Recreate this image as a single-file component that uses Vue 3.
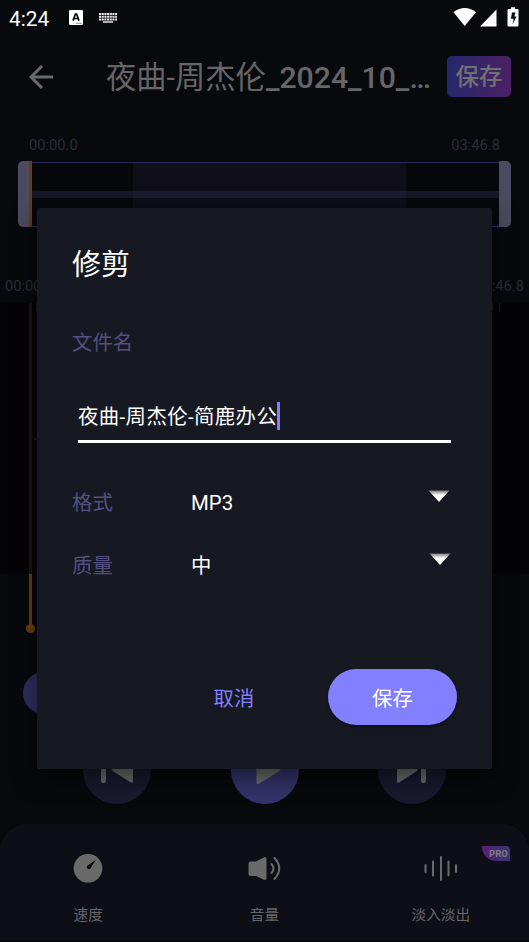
<script setup>
import { ref } from 'vue'

const filename = ref('夜曲-周杰伦-简鹿办公')
const options = [
  { label: '格式', value: 'MP3' },
  { label: '质量', value: '中' },
]
</script>

<template>
  <div class="screen">
    <div class="status">
      <span class="clock">4:24</span>
      <svg class="ime" width="14" height="15" viewBox="0 0 14 15">
        <rect width="14" height="15" rx="1.2" fill="#fff" />
        <path d="M4 10.7 6.4 4h1.2L10 10.7M4.8 8.5h4.4" fill="none" stroke="#08090d" stroke-width="1.7" />
        <path d="M7 13.3h6" stroke="#777" stroke-width=".8" />
      </svg>
      <svg class="keyboard" width="18" height="10" viewBox="0 0 18 10">
        <path d="M0 1h18M0 3.7h18M0 6.4h18" stroke="#e8e8e8" stroke-width="2" stroke-dasharray="2.1 .58" />
        <path d="M4 9h10" stroke="#e8e8e8" stroke-width="1.5" />
      </svg>
      <svg class="signals" width="67" height="20" viewBox="0 0 67 20" fill="#fff">
        <path d="M.5 5.2Q11.7-3 23 5.2L11.7 19z" />
        <path d="M43.5 2.5v17H27z" />
        <path d="M58 .2h4v1.7h2.5q1 0 1 1v15.6q0 1-1 1h-9q-1 0-1-1V2.9q0-1 1-1H58z" />
        <path d="M59 5.5h3.4l-1 4h2.2l-4 7.5 1-5.3h-2.7z" fill="#08090d" />
      </svg>
    </div>

    <header class="header">
      <svg class="back" width="24" height="24" viewBox="0 0 24 24">
        <path d="M24 12H2.500M13 1 2 12l11 11" fill="none" stroke="#6a6a6a" stroke-width="3" />
      </svg>
      <h1 class="title"><span class="name">夜曲-周杰伦</span>_2024_10_…</h1>
      <button class="header-save">保存</button>
    </header>

    <div class="times overview"><span>00:00.0</span><span>03:46.8</span></div>
    <div class="trim">
      <div class="handle left"></div>
      <div class="track"><div class="range"></div></div>
      <div class="handle right"></div>
    </div>
    <div class="times detail"><span>00:00.0</span><span>03:46.8</span></div>
    <div class="wave">
      <div class="tick-row"><i></i><i></i><i></i></div>
      <div class="zero"></div>
    </div>
    <div class="below">
      <div class="needle"></div>
      <div class="knob"></div>
      <div class="round"></div>
    </div>

    <div class="player">
      <div class="control">
        <svg width="68" height="68" viewBox="0 0 68 68" fill="#6a6a6a">
          <rect x="18" y="22" width="5" height="25" rx="2" />
          <path d="M48.500 22q1.500-1 1.500 1v22.500q0 2-2 1L29.500 35q-2-1 0-2z" />
        </svg>
      </div>
      <div class="control main">
        <svg width="68" height="68" viewBox="0 0 68 68" fill="#6a6a6a">
          <path d="M25.500 22q0-2 2-1l21 12q2 1 0 2l-21 13q-2 1-2-1z" />
        </svg>
      </div>
      <div class="control">
        <svg width="68" height="68" viewBox="0 0 68 68" fill="#6a6a6a">
          <path d="M19 23q0-2 1.500-1L39 33q2 1 0 2L21 46.500q-2 1-2-1z" />
          <rect x="43" y="22" width="5" height="25" rx="2" />
        </svg>
      </div>
    </div>

    <nav class="tools">
      <div class="tool">
        <svg width="34" height="30" viewBox="0 0 34 30">
          <circle cx="17" cy="15.300" r="14.300" fill="#6a6a6a" />
          <path d="M25 6.800 20 14.500a2.100 2.100 0 1 1-3.100-2.300z" fill="#0e0e16" />
        </svg>
        <span>速度</span>
      </div>
      <div class="tool">
        <svg width="34" height="30" viewBox="0 0 34 30">
          <path d="M3.500 8.500H9L16.500 4.500q3-1.300 3 1.500v19q0 2.800-3 1.500L9 23H3.500q-2 0-2-2V10.500q0-2 2-2z" fill="#6a6a6a" />
          <path d="M24.500 11q4 4.500 0 9M27.500 5q9.500 10.500 0 21" fill="none" stroke="#6a6a6a" stroke-width="2" stroke-linecap="round" />
        </svg>
        <span>音量</span>
      </div>
      <div class="tool">
        <svg width="34" height="30" viewBox="0 0 34 30">
          <path d="M1.500 12v7M9 8.500v14M17 4v23M24.500 8.500v14M32 12v7" stroke="#6a6a6a" stroke-width="2" stroke-linecap="round" />
        </svg>
        <span>淡入淡出</span>
        <b class="pro">PRO</b>
      </div>
    </nav>

    <section class="dialog">
      <h2>修剪</h2>
      <label class="caption">文件名</label>
      <div class="field"><span>{{ filename }}</span><i class="caret"></i></div>
      <div v-for="o in options" :key="o.label" class="option">
        <span class="key">{{ o.label }}</span>
        <span class="value">{{ o.value }}</span>
        <svg width="22" height="14" viewBox="0 0 22 14">
          <defs>
            <linearGradient id="fade" x1="0" y1="0" x2="0" y2="1">
              <stop offset="0" stop-color="#77777c" />
              <stop offset=".4" stop-color="#fff" />
            </linearGradient>
          </defs>
          <path d="M0 1.500h22L11 13.500z" fill="#0c0d13" />
          <path d="M.5.500h21L11 12z" fill="url(#fade)" />
        </svg>
      </div>
      <div class="actions">
        <button class="cancel">取消</button>
        <button class="confirm">保存</button>
      </div>
    </section>
  </div>
</template>

<style>
body { background: #08090d; }
</style>

<style scoped>
.screen {
  position: relative;
  box-sizing: border-box;
  width: 529px;
  height: 942px;
  overflow: hidden;
  background: #08090d;
  border-bottom: 1px solid #000;
  font-family: Roboto, "Noto Sans CJK SC", sans-serif;
}
.screen * { box-sizing: border-box; }
svg { display: block; flex: none; }
button { border: 0; padding: 0; background: none; font: inherit; }
h1, h2 { margin: 0; font-weight: 400; }

.status { display: flex; height: 36px; padding: 0 9px; }
.clock { width: 60px; color: #fff; font-size: 20.8px; line-height: 38px; }
.ime { margin-top: 10px; }
.keyboard { margin: 13px 0 0 16px; }
.signals { margin: 7px 0 0 auto; }

.header { display: flex; align-items: center; height: 82px; padding: 0 18px 0 29px; }
.title { width: 341px; margin-left: 53px; padding-top: 2px; color: #666668; font-size: 30.2px; font-weight: 500; line-height: 40px; white-space: nowrap; }
.name { font-weight: 400; letter-spacing: .1px; }
.header-save {
  width: 64px; height: 41px; margin: 0 0 1px; border-radius: 5px;
  background: linear-gradient(90deg, #25286b, #4b2063);
  color: #706f72; font-size: 23.5px; font-weight: 500; line-height: 42px;
}

.times { display: flex; justify-content: space-between; color: #2c2c39; font-size: 14.7px; line-height: 20px; }
.overview { height: 43px; padding: 17px 29px 0; }
.trim { display: flex; height: 66px; padding: 0 18px; }
.handle { width: 12px; background: #4b4a60; }
.handle.left { width: 14px; border-right: 3px solid #6b3d0a; border-radius: 5px 0 0 5px; }
.handle.right { border-radius: 0 5px 5px 0; }
.track {
  flex: 1; height: 65px; margin-top: 1px; padding-left: 101px;
  border: solid #292b5d; border-width: 1px 0;
  background: linear-gradient(#181728, #181728) 0 28px / 100% 7px no-repeat, #07080b;
}
.range { width: 273px; height: 63px; background: linear-gradient(#0f0e19 28px, #1d1b33 28px 35px, #0f0e19 35px); }
.detail { height: 76px; padding: 49px 5px 0; }

.wave { height: 271px; padding-left: 29px; background: linear-gradient(#241200, #241200) 29px 0 / 3px 100% no-repeat, #040307; }
.tick-row { display: grid; grid-template-columns: 456px 7px 1px; height: 135px; padding-left: 7px; }
.tick-row i { width: 1px; height: 8px; background: #1b1b20; }
.zero { width: 4px; height: 2px; margin-left: 5px; background: #1b1b20; }
.below { height: 162px; padding-left: 23px; }
.needle { width: 3px; height: 51px; margin-left: 6px; background: #6b3d0a; }
.knob { width: 9px; height: 9px; margin: -1px 0 0 3px; border-radius: 50%; background: #6b3d0a; }
.round { width: 42px; height: 42px; margin-top: 39px; border-radius: 50%; background: #302f60; }

.player { display: flex; justify-content: space-between; height: 88px; padding: 0 83px; }
.control { width: 68px; height: 68px; border-radius: 50%; background: #1a192e; }
.control.main { background: #33326a; }

.tools {
  display: grid; grid-template-columns: repeat(3, 1fr); height: 117px;
  border-radius: 27px 27px 0 0; background: #0e0e16;
}
.tool { position: relative; display: flex; flex-direction: column; align-items: center; padding-top: 29px; color: #66666a; font-size: 14.7px; line-height: 20px; }
.tool span { margin-top: 22px; }
.pro {
  position: absolute; top: 22px; right: 19px; width: 28px; height: 15px; padding-left: 5px;
  border-radius: 0 4px 0 14px; background: linear-gradient(90deg, #5b1e74, #363671);
  color: #807c8c; font-size: 9.5px; line-height: 15px; text-align: center;
}

.dialog {
  position: absolute; left: 37px; top: 208px; width: 455px; height: 561px; padding: 37px 35px 0;
  border-radius: 2px; background: #161822; box-shadow: 0 8px 24px #0008;
}
.dialog h2 { height: 85px; color: #fff; font-size: 29px; line-height: 41px; }
.caption { display: block; height: 61px; color: #535080; font-size: 20.4px; line-height: 26px; }
.field { display: flex; width: 373px; height: 52px; margin-left: 6px; border-bottom: 3px solid #fff; color: #fff; font-size: 20.4px; letter-spacing: .4px; line-height: 53px; }
.caret { width: 3px; height: 28px; margin-top: 11px; background: #8280ff; }
.option { display: grid; grid-template-columns: 119px 237px 22px; height: 63px; font-size: 20.4px; line-height: 32px; }
.field + .option { margin-top: 44px; }
.key { color: #535080; }
.value { color: #fff; }
.option svg { margin-top: 3px; }
.option + .option svg { margin-left: 1px; }
.actions { display: flex; justify-content: flex-end; align-items: center; margin-top: 56px; font-size: 20.4px; }
.cancel { width: 42px; margin-right: 73px; color: #8280ff; }
.confirm { width: 129px; height: 56px; border-radius: 28px; background: #8280ff; color: #fff; box-shadow: 0 2px 3px #0005; }
</style>
